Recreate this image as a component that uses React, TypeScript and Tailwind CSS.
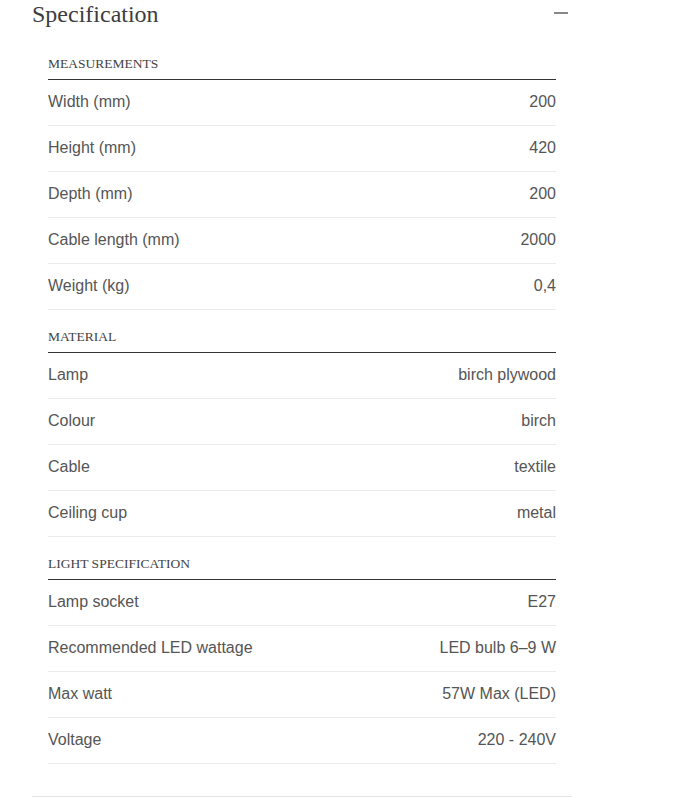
import React from 'react';

type Row = { label: string; value: string };
type Section = { title: string; rows: Row[] };

const sections: Section[] = [
    {
        title: 'Measurements',
        rows: [
            { label: 'Width (mm)', value: '200' },
            { label: 'Height (mm)', value: '420' },
            { label: 'Depth (mm)', value: '200' },
            { label: 'Cable length (mm)', value: '2000' },
            { label: 'Weight (kg)', value: '0,4' },
        ],
    },
    {
        title: 'Material',
        rows: [
            { label: 'Lamp', value: 'birch plywood' },
            { label: 'Colour', value: 'birch' },
            { label: 'Cable', value: 'textile' },
            { label: 'Ceiling cup', value: 'metal' },
        ],
    },
    {
        title: 'Light specification',
        rows: [
            { label: 'Lamp socket', value: 'E27' },
            { label: 'Recommended LED wattage', value: 'LED bulb 6–9 W' },
            { label: 'Max watt', value: '57W Max (LED)' },
            { label: 'Voltage', value: '220 - 240V' },
        ],
    },
];

const App: React.FC = () => {
    return (
        <div className="min-h-[806px] bg-white">
            <div className="ml-8 w-[540px] border-b border-[#e6e6e6] pb-8">
                <div className="flex h-[37px] items-start justify-between pr-1">
                    <h2 className="-mt-[4px] font-['Liberation_Serif',serif] text-[24px] font-normal leading-normal text-[#3d3d3d]">
                        Specification
                    </h2>
                    <span className="mt-3 block h-[2px] w-[14px] bg-[#888]" />
                </div>
                <div className="px-4">
                    {sections.map((section) => (
                        <div key={section.title}>
                            <div className="h-[43px] border-b border-[#333] pt-[19px]">
                                <p className="font-['Liberation_Serif',serif] text-[13.5px] uppercase leading-[16px] text-[#444]">
                                    {section.title}
                                </p>
                            </div>
                            {section.rows.map((row) => (
                                <div
                                    key={row.label}
                                    className="flex h-[46px] items-center justify-between border-b border-[#ebebeb] pb-[2px] font-['Liberation_Sans',Arial,sans-serif] text-[16px] text-[#555]"
                                >
                                    <span>{row.label}</span>
                                    <span>{row.value}</span>
                                </div>
                            ))}
                        </div>
                    ))}
                </div>
            </div>
        </div>
    );
};

export default App;
